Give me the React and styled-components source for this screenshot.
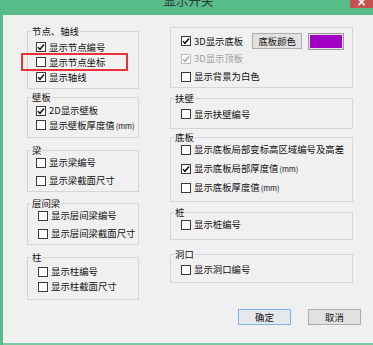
import React from 'react'
import styled, { createGlobalStyle } from 'styled-components'

const GlobalStyle = createGlobalStyle`
  html, body {
    margin: 0;
    padding: 0;
    background: #f0f0f0;
  }
  body {
    font-family: "Noto Sans CJK SC", "Noto Sans", sans-serif;
  }
`

const leftGroups = [
  {
    title: '节点、轴线', h: 58, mt: 16, pt: 3.5, gap: 2, pl: 8,
    items: [
      { text: '显示节点编号', checked: true },
      { text: '显示节点坐标' },
      { text: '显示轴线', checked: true },
    ],
  },
  {
    title: '壁板', h: 41, mt: 8, pt: 1, gap: 1.5, pl: 8,
    items: [
      { text: '2D显示壁板', checked: true },
      { text: '显示壁板厚度值', unit: '(mm)' },
    ],
  },
  {
    title: '梁', h: 42, mt: 12, pt: 0, gap: 5, pl: 8,
    items: [{ text: '显示梁编号' }, { text: '显示梁截面尺寸' }],
  },
  {
    title: '层间梁', h: 42, mt: 11, pt: 0, gap: 5, pl: 10,
    items: [{ text: '显示层间梁编号' }, { text: '显示层间梁截面尺寸' }],
  },
  {
    title: '柱', h: 43, mt: 12, pt: 2, gap: 2, pl: 10,
    items: [{ text: '显示柱编号' }, { text: '显示柱截面尺寸' }],
  },
]

const rightGroups = [
  {
    title: '扶壁', h: 31, mt: 10, pt: 3.5, gap: 0, pl: 10,
    items: [{ text: '显示扶壁编号' }],
  },
  {
    title: '底板', h: 65, mt: 8, pt: 0, gap: 6, pl: 10,
    items: [
      { text: '显示底板局部变标高区域编号及高差' },
      { text: '显示底板局部厚度值', unit: '(mm)', checked: true },
      { text: '显示底板厚度值', unit: '(mm)' },
    ],
  },
  {
    title: '桩', h: 28, mt: 10, pt: 0, gap: 0, pl: 10,
    items: [{ text: '显示桩编号' }],
  },
  {
    title: '洞口', h: 29, mt: 14, pt: 3, gap: 0, pl: 10,
    items: [{ text: '显示洞口编号' }],
  },
]

function CheckBox({ checked, disabled }) {
  return (
    <Box $disabled={disabled}>
      {checked && (
        <svg width="8" height="8" viewBox="0 0 8 8">
          <path
            d="M1 4.2 L3 6.3 L7 1.5"
            fill="none"
            stroke={disabled ? '#a8a8a8' : '#111'}
            strokeWidth="1.5"
          />
        </svg>
      )}
    </Box>
  )
}

function GroupBox({ group }) {
  return (
    <Group $h={group.h} $mt={group.mt}>
      <Legend>{group.title}</Legend>
      <List $pt={group.pt} $pl={group.pl} $gap={group.gap}>
        {group.items.map((item) => (
          <Item key={item.text}>
            <CheckBox checked={item.checked} />
            <span>
              {item.text}
              {item.unit && <Unit>{item.unit}</Unit>}
            </span>
          </Item>
        ))}
      </List>
    </Group>
  )
}

export default function App() {
  return (
    <Window>
      <GlobalStyle />
      <TitleBar>
        <Title>显示开关</Title>
        <CloseButton>×</CloseButton>
      </TitleBar>
      <Body>
        <Columns>
          <Column $w={112}>
            {leftGroups.map((g) => (
              <GroupBox key={g.title} group={g} />
            ))}
          </Column>
          <Column $w={183}>
            <Group $h={61} $mt={12}>
              <List $pt={5} $pl={10} $gap={0}>
                <Item $h={16}>
                  <CheckBox checked />
                  3D显示底板
                  <SmallButton>底板颜色</SmallButton>
                  <Swatch />
                </Item>
                <Item $mt={3} $disabled>
                  <CheckBox checked disabled />
                  3D显示顶板
                </Item>
                <Item $mt={5}>
                  <CheckBox />
                  显示背景为白色
                </Item>
              </List>
            </Group>
            {rightGroups.map((g) => (
              <GroupBox key={g.title} group={g} />
            ))}
          </Column>
        </Columns>
        <Footer>
          <DialogButton $primary>确定</DialogButton>
          <DialogButton>取消</DialogButton>
        </Footer>
      </Body>
      <Highlight />
    </Window>
  )
}

const Window = styled.div`
  position: relative;
  width: 373px;
  height: 345px;
  display: flex;
  flex-direction: column;
  overflow: hidden;
  background: #57bb8a;
`

const TitleBar = styled.div`
  height: 15px;
  flex: none;
  display: grid;
  grid-template-columns: 1fr auto 1fr;
  align-items: start;
  overflow: hidden;
`

const Title = styled.div`
  grid-column: 2;
  margin-top: -5px;
  padding-left: 4px;
  font-size: 12.5px;
  line-height: 12.5px;
  color: #2c3a32;
`

const CloseButton = styled.div`
  grid-column: 3;
  justify-self: end;
  width: 23px;
  height: 8px;
  background: #c75050;
  color: #fff;
  font-family: "DejaVu Sans", sans-serif;
  font-size: 12px;
  font-weight: bold;
  line-height: 4px;
  text-align: center;
  overflow: hidden;
`

const Body = styled.div`
  flex: 1;
  margin-left: 3px;
  padding-left: 24px;
  border-bottom: 2px solid #7cc9a2;
  background: #f0f0f0;
  display: flex;
  flex-direction: column;
`

const Columns = styled.div`
  display: flex;
  align-items: flex-start;
  gap: 31px;
`

const Column = styled.div`
  width: ${(p) => p.$w}px;
  display: flex;
  flex-direction: column;
`

const Group = styled.div`
  box-sizing: border-box;
  height: ${(p) => p.$h}px;
  margin-top: ${(p) => p.$mt}px;
  border: 1px solid #d5d5d5;
  display: flex;
  flex-direction: column;
`

const Legend = styled.span`
  align-self: flex-start;
  height: 12px;
  margin: -7px 0 0 3px;
  padding: 0 1px;
  background: #f0f0f0;
  font-size: 9.4px;
  line-height: 12px;
  color: #111;
  white-space: nowrap;
`

const List = styled.div`
  display: flex;
  flex-direction: column;
  padding-top: ${(p) => p.$pt}px;
  padding-left: ${(p) => p.$pl}px;
  gap: ${(p) => p.$gap}px;
`

const Item = styled.div`
  display: flex;
  align-items: center;
  gap: 3px;
  height: ${(p) => p.$h || 13}px;
  margin-top: ${(p) => p.$mt || 0}px;
  font-size: 9.4px;
  line-height: 13px;
  color: ${(p) => (p.$disabled ? '#a0a0a0' : '#111')};
  white-space: nowrap;
`

const Unit = styled.span`
  font-size: 7.5px;
  margin-left: 1px;
`

const Box = styled.span`
  box-sizing: border-box;
  flex: none;
  width: 10px;
  height: 10px;
  border: 1px solid ${(p) => (p.$disabled ? '#bcbcbc' : '#3a3a3a')};
  background: #fff;
  display: flex;
  align-items: center;
  justify-content: center;
`

const SmallButton = styled.div`
  box-sizing: border-box;
  flex: none;
  width: 50px;
  height: 16px;
  margin-left: 6px;
  border: 1px solid #adadad;
  background: #e1e1e1;
  font-size: 9.4px;
  line-height: 14px;
  text-align: center;
  color: #111;
`

const Swatch = styled.div`
  box-sizing: border-box;
  flex: none;
  width: 36px;
  height: 17px;
  margin-left: 3px;
  border: 1px solid #9a9a9a;
  box-shadow: inset 0 0 0 1px #e4e4e4;
  background: #a100c4;
`

const Footer = styled.div`
  display: flex;
  justify-content: flex-end;
  gap: 17px;
  margin-top: 9px;
  padding-right: 12px;
`

const DialogButton = styled.div`
  box-sizing: border-box;
  width: 53px;
  height: 16px;
  border: 1px solid ${(p) => (p.$primary ? '#7eb4ea' : '#adadad')};
  background: ${(p) => (p.$primary ? '#e5e8ec' : '#e1e1e1')};
  font-size: 9.4px;
  line-height: 14px;
  text-align: center;
  color: #111;
`

const Highlight = styled.div`
  position: absolute;
  left: 21px;
  top: 53px;
  width: 107px;
  height: 18px;
  box-sizing: border-box;
  border: 2px solid #e8333b;
  pointer-events: none;
`
